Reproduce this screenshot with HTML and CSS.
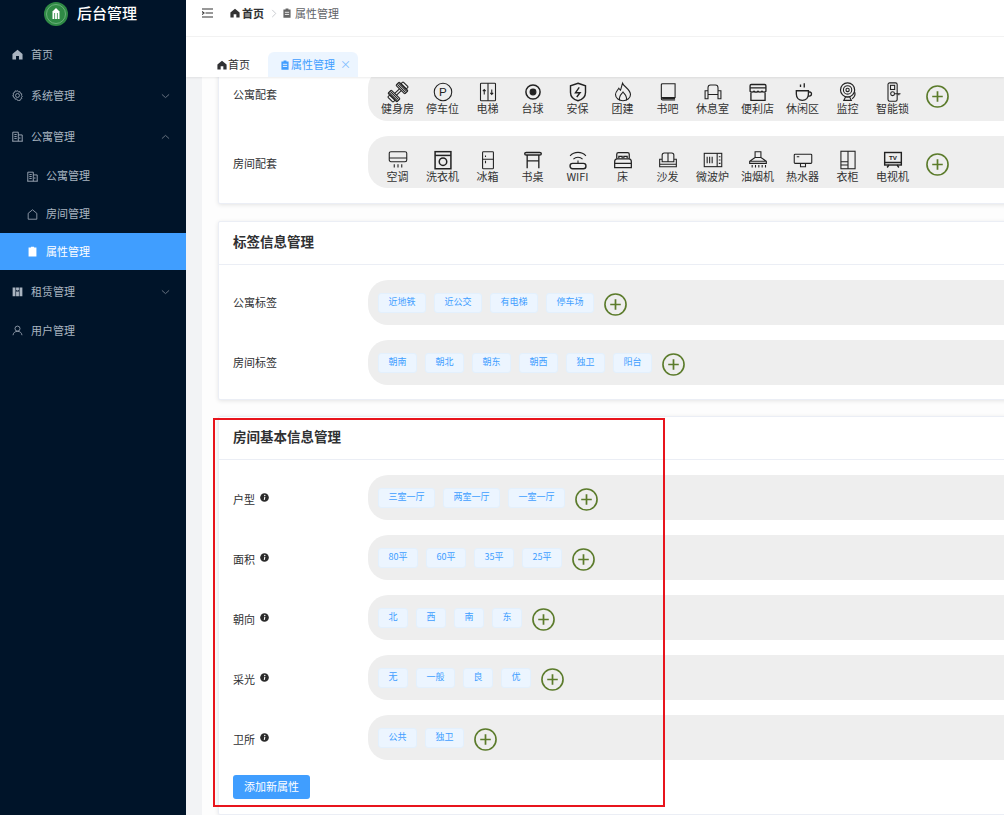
FILE: index.html
```html
<!DOCTYPE html>
<html lang="zh-CN">
<head>
<meta charset="utf-8">
<title>属性管理</title>
<link rel="stylesheet" href="styles.css">
</head>
<body>
<svg class="defs" width="0" height="0">
  <symbol id="plus" viewBox="0 0 24 24"><circle cx="12" cy="12" r="11" fill="none" stroke="#5b7b2b" stroke-width="1.7"/><path d="M6.5 12h11M12 6.5v11" fill="none" stroke="#5b7b2b" stroke-width="1.8"/></symbol>
  <symbol id="info" viewBox="0 0 10 10"><circle cx="5" cy="5" r="4.8" fill="#2b2b2b"/><circle cx="5.3" cy="2.7" r=".8" fill="#fff"/><path d="M5.4 4.3 4.7 7.6" stroke="#fff" stroke-width="1.2" fill="none"/></symbol>
  <symbol id="doc" viewBox="0 0 12 14"><path d="M1 2h3V.8h4V2h3v11.5H1z" fill="currentColor"/><path d="M3 6h6M3 9h6" stroke="#fff" stroke-width="1.2" class="doc-line"/></symbol>
  <symbol id="home" viewBox="0 0 12 12"><path d="M6 .8 11.5 5.4V11.4H7.6V7.6H4.4v3.8H.5V5.4z" fill="currentColor"/></symbol>
  <symbol id="office" viewBox="0 0 14 14"><path d="M1 13V1.500h7V13M8 5h5v8M.3 13h13.400M3 4.500h3M3 7h3M3 9.500h3M10 8v2" fill="none" stroke="currentColor" stroke-width="1.100"/></symbol>
  <symbol id="chevron" viewBox="0 0 10 6"><path d="M1 1.200 5 4.800 9 1.200" fill="none" stroke="currentColor" stroke-width="1"/></symbol>
</svg>

<div class="layout">
  <aside class="sidebar">
    <div class="brand">
      <svg class="brand-logo" viewBox="0 0 24 24"><circle cx="12" cy="12" r="12" fill="#2f8a45"/><circle cx="12" cy="12" r="9.500" fill="none" stroke="#8fc79c" stroke-width=".6"/><path d="M8.500 17V9.500L12 6l3.500 3.500V17z" fill="#fff"/><path d="M10.600 11v6M13.400 11v6" stroke="#2f8a45" stroke-width=".8"/></svg>
      <span class="brand-name">后台管理</span>
    </div>
    <nav class="menu">
      <a class="menu-item"><svg class="menu-icon"><use href="#home"/></svg>首页</a>
      <a class="menu-item">
        <svg class="menu-icon" viewBox="0 0 14 14"><path d="M7 .8l1.100 1.700 2-.4.500 2 1.900.8-.5 1.900 1.200 1-1.200 1.400.5 1.700-1.900.8-.5 2-2-.4L7 13.200 5.900 11.300l-2 .4-.5-2-1.900-.8.500-1.700L.8 6.800l1.200-1-.5-1.900 1.900-.8.500-2 2 .4z" fill="none" stroke="currentColor" stroke-width="1"/><circle cx="7" cy="7" r="2.500" fill="none" stroke="currentColor" stroke-width="1"/></svg>
        系统管理<svg class="chevron"><use href="#chevron"/></svg>
      </a>
      <a class="menu-item"><svg class="menu-icon"><use href="#office"/></svg>公寓管理<svg class="chevron chevron-up"><use href="#chevron"/></svg></a>
      <a class="sub-item"><svg class="menu-icon"><use href="#office"/></svg>公寓管理</a>
      <a class="sub-item"><svg class="menu-icon" viewBox="0 0 14 14"><path d="M1.500 13V5.500L7 1l5.500 4.500V13z" fill="none" stroke="currentColor" stroke-width="1"/></svg>房间管理</a>
      <a class="sub-item sub-item-active"><svg class="menu-icon"><use href="#doc"/></svg>属性管理</a>
      <a class="menu-item"><svg class="menu-icon" viewBox="0 0 14 14"><path d="M.8 2h3.600v11H.8zM5.200 2h3.600v3l-1.800 1-1.800-1zM5.200 7h3.600v6H5.200zM9.600 2h3.600v11H9.600z" fill="currentColor"/></svg>租赁管理<svg class="chevron"><use href="#chevron"/></svg></a>
      <a class="menu-item menu-item-last"><svg class="menu-icon" viewBox="0 0 14 14"><circle cx="7" cy="4.600" r="3.200" fill="none" stroke="currentColor"/><path d="M1.300 13c.3-3 2.600-5 5.700-5s5.400 2 5.700 5" fill="none" stroke="currentColor"/></svg>用户管理</a>
    </nav>
  </aside>

  <div class="main">
    <header class="topbar">
      <svg class="hamburger" viewBox="0 0 12 10"><path d="M0 1h11M3.500 5H11M0 9h11M0 3.500 2 5 0 6.500" fill="none" stroke="#333" stroke-width="1.100"/></svg>
      <svg class="crumb-icon crumb-icon-dark"><use href="#home"/></svg>
      <span class="crumb-home">首页</span>
      <svg class="crumb-sep" viewBox="0 0 6 10"><path d="M1 1l4 4-4 4" fill="none" stroke="#c4c7cc"/></svg>
      <svg class="crumb-icon crumb-icon-grey"><use href="#doc"/></svg>
      <span class="crumb-page">属性管理</span>
    </header>

    <div class="tabs">
      <div class="tab"><svg class="tab-icon"><use href="#home"/></svg>首页</div>
      <div class="tab tab-active"><svg class="tab-icon"><use href="#doc"/></svg>属性管理<span class="tab-close">×</span></div>
    </div>

    <div class="content">
      <div class="panel">
        <section class="card">
          <div class="card-body">
            <div class="row">
              <span class="row-label">公寓配套</span>
              <div class="pill pill-icons pill-tall">
                <div class="facility"><svg class="facility-icon" viewBox="0 0 24 24"><g transform="rotate(-45 12 12)"><rect x="-1" y="7.500" width="3.500" height="9" rx="1"/><rect x="2.500" y="4.500" width="5.500" height="15" rx="1"/><path d="M4 5v14M6 5v14"/><rect x="16" y="4.500" width="5.500" height="15" rx="1"/><path d="M18 5v14M20 5v14"/><rect x="21.500" y="7.500" width="3.500" height="9" rx="1"/><path d="M8 10.500h8M8 13.500h8"/></g></svg><span>健身房</span></div>
                <div class="facility"><svg class="facility-icon" viewBox="0 0 24 24"><circle cx="12" cy="12" r="10.500"/><text x="12" y="17" class="icon-letter">P</text></svg><span>停车位</span></div>
                <div class="facility"><svg class="facility-icon" viewBox="0 0 24 24"><rect x="3" y="1.500" width="18" height="21" rx="1"/><path d="M12 1.500v21M7.500 15V9M5.800 11l1.700-2 1.700 2M16.500 9v6M14.800 13l1.700 2 1.700-2"/></svg><span>电梯</span></div>
                <div class="facility"><svg class="facility-icon" viewBox="0 0 24 24"><circle cx="12" cy="12" r="8.500" stroke-width="1.800"/><circle cx="12" cy="12" r="3.500" fill="#222"/></svg><span>台球</span></div>
                <div class="facility"><svg class="facility-icon" viewBox="0 0 24 24"><path d="M12 1.500 21 4.500v8c0 5-4 8.500-9 10-5-1.500-9-5-9-10v-8z" stroke-width="1.700"/><path d="M13.500 6.500 9 12.800h5.500L10.500 18" stroke-width="1.700"/></svg><span>安保</span></div>
                <div class="facility"><svg class="facility-icon" viewBox="0 0 24 24"><path d="M11.500 1.500c1 3.500 9.500 7.500 9.500 13.500 0 4.500-4.500 7.500-9 7.500S3 19.500 3 15c0-3 2.500-5 4-7.500 1 1.500 1.500 2 2 2.300C10 7 10.500 4 11.500 1.500z"/><path d="M8 22c-1.500-5 2-7 4-10 2 3 5.500 5 4 10"/></svg><span>团建</span></div>
                <div class="facility"><svg class="facility-icon" viewBox="0 0 24 24"><path d="M4 18.500V3.500C4 2.500 4.500 2 5.500 2H20.500V18.500H5.500C4.500 18.500 4 19 4 20s.5 1.500 1.500 1.500H20.500"/><path d="M5 20h15.500" stroke-width="1.800"/></svg><span>书吧</span></div>
                <div class="facility"><svg class="facility-icon" viewBox="0 0 24 24"><path d="M6 11V7c0-2 1-3.500 3-3.500h6c2 0 3 1.500 3 3.500v4M2.500 10.500h3.500V20H2.500zM18 10.500h3.500V20H18zM6 15h12"/></svg><span>休息室</span></div>
                <div class="facility"><svg class="facility-icon" viewBox="0 0 24 24"><path d="M4 3h16c1 0 1.500.5 1.500 1.500V11c-1.500 1.500-3 1.500-4.700 0-1.500 1.500-3.300 1.500-4.800 0-1.500 1.500-3.300 1.500-4.800 0-1.700 1.500-3.200 1.500-4.700 0V4.500C2.500 3.500 3 3 4 3z" stroke-width="1.600"/><path d="M3.500 12.500V22h17v-9.500M2.500 7h19" stroke-width="1.600"/></svg><span>便利店</span></div>
                <div class="facility"><svg class="facility-icon" viewBox="0 0 24 24"><path d="M4 10.500h14.500v4c0 4.500-3 7.500-7.300 7.500S4 19 4 14.500zM18.500 12h1.500c3 0 3 5-.5 5h-1.500M9 3v3M13.500 1.500v5" stroke-width="1.600"/></svg><span>休闲区</span></div>
                <div class="facility"><svg class="facility-icon" viewBox="0 0 24 24"><circle cx="11.500" cy="9.500" r="8.500" stroke-width="1.400"/><circle cx="11.500" cy="9.500" r="5"/><circle cx="11.500" cy="9.500" r="2"/><path d="M20 12c1 3 0 6-3 8M7 22h9l-2-4H9z" stroke-width="1.400"/></svg><span>监控</span></div>
                <div class="facility"><svg class="facility-icon" viewBox="0 0 24 24"><rect x="6" y="1" width="11" height="22" rx="2"/><rect x="9" y="4" width="5" height="5"/><circle cx="11.500" cy="14" r="2.300"/><path d="M13.800 14H21M19 14v2"/></svg><span>智能锁</span></div>
                <svg class="add-btn"><use href="#plus"/></svg>
              </div>
            </div>
            <div class="row">
              <span class="row-label row-label-low">房间配套</span>
              <div class="pill pill-icons">
                <div class="facility"><svg class="facility-icon" viewBox="0 0 24 24"><rect x="1.500" y="2" width="21" height="12" rx="2"/><path d="M1.500 9.500h21M7.500 17v4M12 17v4M16.500 17v4"/></svg><span>空调</span></div>
                <div class="facility"><svg class="facility-icon" viewBox="0 0 24 24"><rect x="2.500" y="2" width="19" height="20.500" stroke-width="1.800"/><path d="M2.500 6.500h19" stroke-width="1.800"/><circle cx="12" cy="14" r="4.500" stroke-width="1.800"/></svg><span>洗衣机</span></div>
                <div class="facility"><svg class="facility-icon" viewBox="0 0 24 24"><rect x="5.500" y="2" width="13" height="20.500" rx="1"/><path d="M5.500 11h13M9 6.500v2M9 13v3"/></svg><span>冰箱</span></div>
                <div class="facility"><svg class="facility-icon" viewBox="0 0 24 24"><path d="M4 3h16c1.500 0 2 .8 2 1.500S21.500 6 20 6H4C2.500 6 2 5.200 2 4.500S2.500 3 4 3zM5 6v16M19 6v16M5 13h14" stroke-width="1.600"/></svg><span>书桌</span></div>
                <div class="facility"><svg class="facility-icon" viewBox="0 0 24 24"><path d="M2.500 7c5-5.500 14-5.500 19 0M6.500 11c3-3 8-3 11 0"/><rect x="2.500" y="16" width="19" height="6.500" rx="3" stroke-width="1.700"/><path d="M12 12.500v3.500"/></svg><span>WIFI</span></div>
                <div class="facility"><svg class="facility-icon" viewBox="0 0 24 24"><path d="M4.500 10V5c0-1 1-2 2-2h11c1 0 2 1 2 2v5M2 21v-7c0-2 1-3.500 3-3.500h14c2 0 3 1.500 3 3.500v7zM2 16h20" stroke-width="1.500"/><path d="M7 10V7.500h4V10M13 10V7.500h4V10" stroke-width="1.500"/></svg><span>床</span></div>
                <div class="facility"><svg class="facility-icon" viewBox="0 0 24 24"><path d="M5 11V6c0-1.500 1-2.500 2.500-2.500h9C18 3.500 19 4.500 19 6v5M12 3.500V14M2 11h3v3h14v-3h3v9H2zM2 17h20"/></svg><span>沙发</span></div>
                <div class="facility"><svg class="facility-icon" viewBox="0 0 24 24"><rect x="1.500" y="4" width="21" height="16"/><path d="M17 4v16M5 8v8M8 8v8M11 8v8M19 8h2M19 12h2M19 16h2"/></svg><span>微波炉</span></div>
                <div class="facility"><svg class="facility-icon" viewBox="0 0 24 24"><path d="M8.500 2h7v7h-7zM8.500 9 2 13.500v2.500h20v-2.500L15.500 9M2 13.500h20M5 18v3M9 18v3M13 18v3M17 18v3M21 18v3"/></svg><span>油烟机</span></div>
                <div class="facility"><svg class="facility-icon" viewBox="0 0 24 24"><rect x="1.500" y="5" width="21" height="11" rx="1"/><path d="M4.500 8h3M9 16v4h6v-4"/></svg><span>热水器</span></div>
                <div class="facility"><svg class="facility-icon" viewBox="0 0 24 24"><rect x="3.500" y="1.500" width="17" height="21"/><path d="M12 1.500v21M3.500 14h8.500M3.500 18h8.500"/></svg><span>衣柜</span></div>
                <div class="facility"><svg class="facility-icon" viewBox="0 0 24 24"><rect x="2" y="3" width="20" height="15" stroke-width="1.700"/><path d="M5 21l2-3M19 21l-2-3M2 15h20" stroke-width="1.700"/><text x="12" y="12.500" class="icon-tv">TV</text></svg><span>电视机</span></div>
                <svg class="add-btn"><use href="#plus"/></svg>
              </div>
            </div>
          </div>
        </section>

        <section class="card card-short">
          <div class="card-header">标签信息管理</div>
          <div class="card-body card-body-tight">
            <div class="row">
              <span class="row-label">公寓标签</span>
              <div class="pill">
                <span class="tag">近地铁</span><span class="tag">近公交</span><span class="tag">有电梯</span><span class="tag">停车场</span>
                <svg class="add-btn"><use href="#plus"/></svg>
              </div>
            </div>
            <div class="row">
              <span class="row-label">房间标签</span>
              <div class="pill">
                <span class="tag">朝南</span><span class="tag">朝北</span><span class="tag">朝东</span><span class="tag">朝西</span><span class="tag">独卫</span><span class="tag">阳台</span>
                <svg class="add-btn"><use href="#plus"/></svg>
              </div>
            </div>
          </div>
        </section>

        <section class="card">
          <div class="card-header">房间基本信息管理</div>
          <div class="card-body">
            <div class="row">
              <span class="row-label row-label-low">户型<svg class="info-icon"><use href="#info"/></svg></span>
              <div class="pill">
                <span class="tag">三室一厅</span><span class="tag">两室一厅</span><span class="tag">一室一厅</span>
                <svg class="add-btn"><use href="#plus"/></svg>
              </div>
            </div>
            <div class="row">
              <span class="row-label row-label-low">面积<svg class="info-icon"><use href="#info"/></svg></span>
              <div class="pill">
                <span class="tag">80平</span><span class="tag">60平</span><span class="tag">35平</span><span class="tag">25平</span>
                <svg class="add-btn"><use href="#plus"/></svg>
              </div>
            </div>
            <div class="row">
              <span class="row-label row-label-low">朝向<svg class="info-icon"><use href="#info"/></svg></span>
              <div class="pill">
                <span class="tag">北</span><span class="tag">西</span><span class="tag">南</span><span class="tag">东</span>
                <svg class="add-btn"><use href="#plus"/></svg>
              </div>
            </div>
            <div class="row">
              <span class="row-label row-label-low">采光<svg class="info-icon"><use href="#info"/></svg></span>
              <div class="pill">
                <span class="tag">无</span><span class="tag">一般</span><span class="tag">良</span><span class="tag">优</span>
                <svg class="add-btn"><use href="#plus"/></svg>
              </div>
            </div>
            <div class="row">
              <span class="row-label row-label-low">卫所<svg class="info-icon"><use href="#info"/></svg></span>
              <div class="pill">
                <span class="tag">公共</span><span class="tag">独卫</span>
                <svg class="add-btn"><use href="#plus"/></svg>
              </div>
            </div>
            <div><button class="primary-btn">添加新属性</button></div>
          </div>
        </section>
      </div>
    </div>
  </div>
</div>

<div class="annotation"></div>
</body>
</html>
```

FILE: styles.css
```css
* { box-sizing: border-box; }
html, body { margin: 0; height: 100%; overflow: hidden; }
body { font-family: "Noto Sans CJK SC", "Liberation Sans", sans-serif; font-size: 11px; color: #303133; background: #fff; }
.defs { position: absolute; }

.layout { display: flex; height: 815px; }

/* sidebar */
.sidebar { width: 186px; flex: none; background: #001429; color: #a9b4c0; }
.brand { height: 34px; display: flex; align-items: flex-start; padding: 2px 0 0 44px; gap: 9px; }
.brand-logo { width: 24px; height: 24px; }
.brand-name { color: #fff; font-size: 15px; font-weight: 500; line-height: 22px; }
.menu { display: flex; flex-direction: column; }
.menu-item { height: 40px; margin-bottom: 1px; padding: 0 0 1px 12px; display: flex; align-items: center; gap: 8px; }
.menu-item-last { margin-top: -2px; }
.sub-item { height: 38px; display: flex; align-items: center; padding: 0 0 2px 27px; gap: 8px; }
.sub-item-active { height: 37px; background: #409eff; color: #fff; margin-bottom: 1px; }
.sub-item-active .doc-line { stroke: #409eff; }
.menu-icon { width: 11px; height: 11px; margin-top: 2px; flex: none; }
.chevron { width: 9px; height: 6px; margin: 2px 16px 0 auto; color: #6f7b88; }
.chevron-up { transform: rotate(180deg); }

/* top bar and tabs */
.main { flex: 1; min-width: 0; display: flex; flex-direction: column; background: #fff; }
.topbar { height: 37px; flex: none; display: flex; align-items: center; padding: 0 0 11px 16px; border-bottom: 1px solid #f3f3f3; }
.hamburger { width: 12px; height: 10px; margin: 0 16px 0 0; }
.crumb-icon { width: 10px; height: 10px; margin: 1px 2px 0 0; }
.crumb-icon-dark { color: #333; }
.crumb-icon-grey { color: #666; }
.crumb-home { font-weight: 600; color: #303133; }
.crumb-sep { width: 6px; height: 9px; margin: 1px 5px 0 7px; }
.crumb-page { color: #606266; margin-left: 1px; }

.tabs { height: 40px; flex: none; display: flex; align-items: flex-end; padding-left: 31px; gap: 18px; box-shadow: 0 1px 2px rgba(0, 0, 0, .08); position: relative; }
.tab { height: 25px; display: flex; align-items: center; padding-bottom: 1px; color: #303133; }
.tab-active { width: 90px; padding-left: 12px; background: #ecf5ff; color: #409eff; border-radius: 6px 6px 0 0; }
.tab-active .doc-line { stroke: #ecf5ff; }
.tab-icon { width: 10px; height: 10px; margin: 1px 1px 0 0; }
.tab-close { margin-left: 5px; font-size: 11px; color: #79bbff; }

/* scrolled content */
.content { flex: 1; overflow: hidden; background: #f2f3f5; padding-left: 16px; }
.panel { width: 900px; height: calc(100% + 25px); background: #fdfdfd; padding-left: 16px; margin-top: -25px; }
.card { background: #fff; border: 1px solid #ebeef5; box-shadow: 0 1px 4px rgba(0, 0, 0, .1); border-radius: 2px; margin-bottom: 17px; }
.card-short { margin-bottom: 16px; }
.card-header { height: 43px; border-bottom: 1px solid #ebeef5; padding-left: 14px; font-size: 13.500px; font-weight: 700; line-height: 39px; color: #303133; }
.card-body { padding: 15px 14px 15px; display: flex; flex-direction: column; gap: 15px; }
.card-body-tight { padding-bottom: 14px; }

.row { display: flex; align-items: center; }
.row-label { width: 135px; padding-bottom: 2px; flex: none; font-size: 11px; display: flex; align-items: center; color: #303133; }
.row-label-low { padding: 2px 0 0; }
.pill { flex: 1; height: 45px; background: #eeeeee; border-radius: 20px 0 0 20px; display: flex; align-items: flex-start; gap: 8px; padding: 13px 0 0 10px; }
.pill-icons { height: 52px; padding: 14px 0 0 7px; gap: 0; }
.pill-tall { height: 53px; }

.tag { height: 20px; padding: 0 9.500px; background: #ecf5ff; border: 1px solid #e3f0fd; border-radius: 3px; color: #409eff; font-size: 9px; line-height: 16px; white-space: nowrap; }
.add-btn { width: 23px; height: 23px; margin-left: 2px; flex: none; }
.pill-icons .add-btn { margin: 3px 0 0 11px; }
.info-icon { width: 9px; height: 9px; margin: -2px 0 0 5px; }

.facility { width: 45px; display: flex; flex-direction: column; align-items: center; font-size: 11px; line-height: 13px; color: #333; white-space: nowrap; }
.facility-icon { width: 20px; height: 20px; fill: none; stroke: #222; stroke-width: 1.300; overflow: visible; }
.icon-letter { font-family: "Liberation Sans", sans-serif; font-size: 14px; text-anchor: middle; fill: #222; stroke: none; }
.icon-tv { font-family: "Liberation Sans", sans-serif; font-size: 7.500px; font-weight: 700; text-anchor: middle; fill: #222; stroke: none; }

.primary-btn { width: 77px; height: 24px; padding: 0 0 2px; border: 0; border-radius: 3px; background: #409eff; color: #fff; font-family: inherit; font-size: 11px; display: block; }

/* red marker drawn over the page */
.annotation { position: absolute; left: 213px; top: 418px; width: 452px; height: 389px; border: 2px solid #e8141c; pointer-events: none; }
```
